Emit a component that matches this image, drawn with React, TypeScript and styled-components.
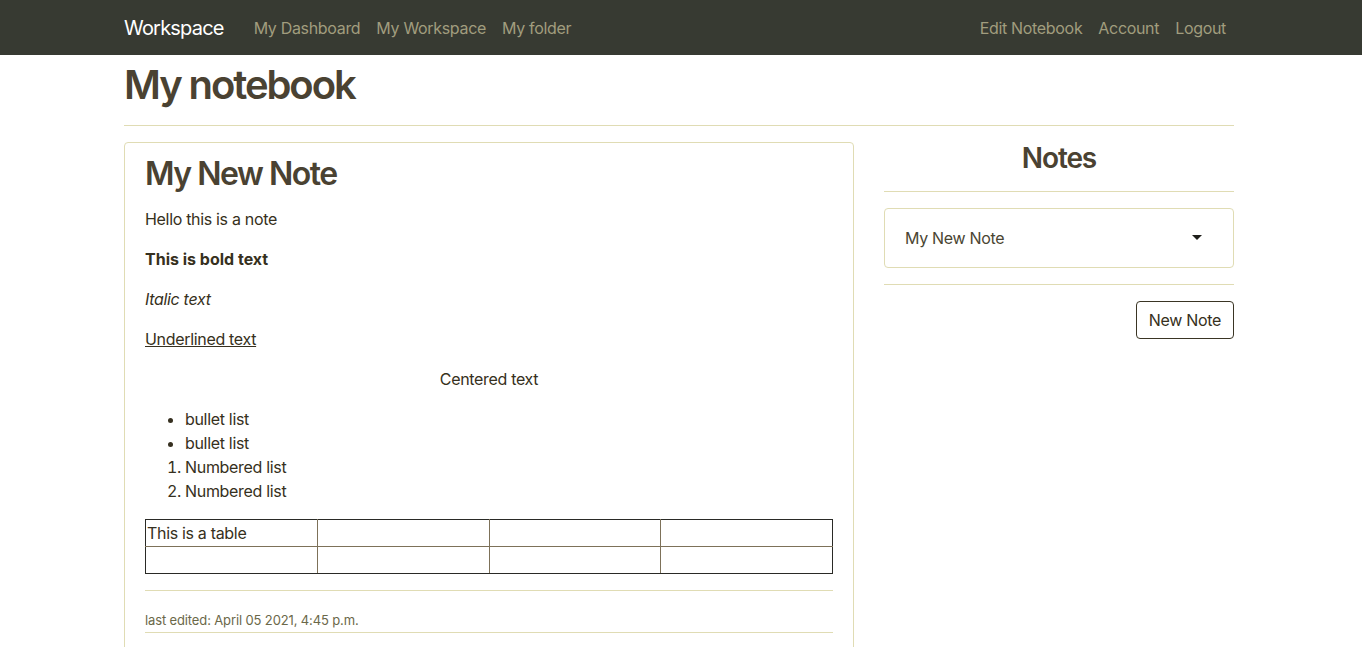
import React from "react";
import styled, { createGlobalStyle } from "styled-components";

const Global = createGlobalStyle`
  * { box-sizing: border-box; }
  body {
    margin: 0;
    font-family: Inter, "Noto Sans", "Liberation Sans", sans-serif;
    font-size: 16px;
    line-height: 1.5;
    letter-spacing: -0.02em;
    color: #363020;
    background: #fff;
  }
`;

const Nav = styled.nav`
  background: #373a32;
  height: 55px;
  display: flex;
  align-items: center;
`;

const NavInner = styled.div`
  width: 1114px;
  padding-right: 4px;
  margin: 0 auto;
  display: flex;
  align-items: center;
`;

const Brand = styled.a`
  color: #fff;
  font-size: 20px;
  line-height: 30px;
  margin-right: 22px;
  text-decoration: none;
  letter-spacing: -0.04em;
`;

const NavGroup = styled.div<{ $right?: boolean }>`
  display: flex;
  margin-left: ${(p) => (p.$right ? "auto" : "0")};
`;

const NavLink = styled.a`
  color: #a19d7e;
  font-size: 16px;
  padding: 0 8px;
  text-decoration: none;
`;

const Container = styled.main`
  width: 1114px;
  padding-right: 4px;
  margin: 0 auto;
`;

const PageTitle = styled.h1`
  font-size: 40px;
  font-weight: 600;
  line-height: 48px;
  margin: 6px 0 0;
  color: #4a4232;
  letter-spacing: -0.052em;
`;

const Rule = styled.hr<{ $mt?: number; $mb?: number }>`
  border: 0;
  border-top: 1px solid #e0dcb4;
  margin: ${(p) => p.$mt ?? 16}px 0 ${(p) => p.$mb ?? 16}px;
`;

const Row = styled.div`
  display: grid;
  grid-template-columns: 730px 350px;
  column-gap: 30px;
  align-items: start;
`;

const Card = styled.section`
  border: 1px solid #e0dcb4;
  border-radius: 4px 4px 0 0;
  padding: 12px 20px 20px;
`;

const NoteTitle = styled.h2`
  font-size: 32px;
  font-weight: 600;
  line-height: 38px;
  margin: 0 0 14px;
  color: #4a4232;
  letter-spacing: -0.046em;
`;

const P = styled.p<{ $bold?: boolean; $italic?: boolean; $underline?: boolean; $center?: boolean }>`
  margin: 0 0 16px;
  font-weight: ${(p) => (p.$bold ? 700 : 400)};
  letter-spacing: ${(p) => (p.$bold ? "0" : "inherit")};
  font-style: ${(p) => (p.$italic ? "italic" : "normal")};
  text-decoration: ${(p) => (p.$underline ? "underline" : "none")};
  text-align: ${(p) => (p.$center ? "center" : "left")};
`;

const Bullets = styled.ul`
  margin: 0;
  padding-left: 40px;
`;

const Numbered = styled.ol`
  margin: 0 0 16px;
  padding-left: 40px;
`;

const Table = styled.table`
  width: 100%;
  border-collapse: collapse;
  table-layout: fixed;
`;

const Cell = styled.td`
  border: 1px solid #7d7159;
  padding: 0 1px;
  height: 27px;
  line-height: 24px;
  vertical-align: middle;
  tr:first-child > & { border-top-color: #2a2a26; }
  tr:last-child > & { border-bottom-color: #2a2a26; }
  &:first-child { border-left-color: #2a2a26; }
  &:last-child { border-right-color: #2a2a26; }
`;

const Footer = styled.p`
  margin: 0;
  padding: 19px 0 2px;
  font-size: 13px;
  line-height: 20px;
  letter-spacing: -0.01em;
  color: #6b6849;
`;

const Side = styled.aside`
  display: flex;
  flex-direction: column;
`;

const SideTitle = styled.h3`
  font-size: 28px;
  font-weight: 600;
  line-height: 33px;
  margin: 0;
  text-align: center;
  color: #4a4232;
  letter-spacing: -0.04em;
`;

const Dropdown = styled.button`
  height: 60px;
  width: 100%;
  display: flex;
  align-items: center;
  justify-content: space-between;
  padding: 0 31px 0 20px;
  background: #fff;
  border: 1px solid #e0dcb4;
  border-radius: 4px;
  font: inherit;
  letter-spacing: inherit;
  color: #4a4532;
  text-align: left;
`;

const Caret = styled.span`
  width: 0;
  height: 0;
  border-top: 5px solid #1e1e1a;
  border-left: 5px solid transparent;
  border-right: 5px solid transparent;
  margin-top: -1px;
`;

const Actions = styled.div`
  display: flex;
  justify-content: flex-end;
`;

const Button = styled.button`
  height: 38px;
  padding: 0 12px;
  background: #fff;
  border: 1px solid #3a3524;
  border-radius: 4px;
  font: inherit;
  letter-spacing: inherit;
  color: #363020;
`;

export default function App() {
  return (
    <>
      <Global />
      <Nav>
        <NavInner>
          <Brand href="#">Workspace</Brand>
          <NavGroup>
            <NavLink href="#">My Dashboard</NavLink>
            <NavLink href="#">My Workspace</NavLink>
            <NavLink href="#">My folder</NavLink>
          </NavGroup>
          <NavGroup $right>
            <NavLink href="#">Edit Notebook</NavLink>
            <NavLink href="#">Account</NavLink>
            <NavLink href="#">Logout</NavLink>
          </NavGroup>
        </NavInner>
      </Nav>
      <Container>
        <PageTitle>My notebook</PageTitle>
        <Rule />
        <Row>
          <Card>
            <NoteTitle>My New Note</NoteTitle>
            <P>Hello this is a note</P>
            <P $bold>This is bold text</P>
            <P $italic>Italic text</P>
            <P $underline>Underlined text</P>
            <P $center>Centered text</P>
            <Bullets>
              <li>bullet list</li>
              <li>bullet list</li>
            </Bullets>
            <Numbered>
              <li>Numbered list</li>
              <li>Numbered list</li>
            </Numbered>
            <Table>
              <tbody>
                <tr>
                  <Cell>This is a table</Cell>
                  <Cell />
                  <Cell />
                  <Cell />
                </tr>
                <tr>
                  <Cell />
                  <Cell />
                  <Cell />
                  <Cell />
                </tr>
              </tbody>
            </Table>
            <Rule $mt={16} $mb={0} />
            <Footer>last edited: April 05 2021, 4:45 p.m.</Footer>
            <Rule $mt={0} $mb={16} />
          </Card>
          <Side>
            <SideTitle>Notes</SideTitle>
            <Rule />
            <Dropdown>
              <span>My New Note</span>
              <Caret />
            </Dropdown>
            <Rule />
            <Actions>
              <Button>New Note</Button>
            </Actions>
          </Side>
        </Row>
      </Container>
    </>
  );
}
